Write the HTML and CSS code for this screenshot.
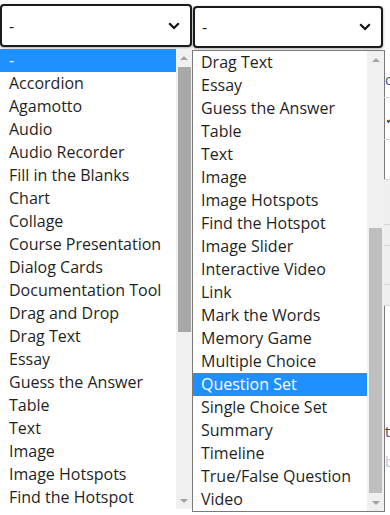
FILE: index.html
```html
<!DOCTYPE html>
<html lang="en">
<head>
<meta charset="utf-8">
<title>Select dropdowns</title>
<link rel="stylesheet" href="styles.css">
</head>
<body>
<div class="page">
  <div class="col col-left">
    <div class="select select-left">
      <span class="select-value">-</span>
      <svg class="chevron" width="12" height="8" viewBox="0 0 12 8"><path d="M1.2 1.2 L6 6 L10.8 1.2" fill="none" stroke="#111" stroke-width="2.2"/></svg>
    </div>
    <div class="listbox listbox-left">
      <ul class="options">
        <li class="option selected">-</li>
        <li class="option">Accordion</li>
        <li class="option">Agamotto</li>
        <li class="option">Audio</li>
        <li class="option">Audio Recorder</li>
        <li class="option">Fill in the Blanks</li>
        <li class="option">Chart</li>
        <li class="option">Collage</li>
        <li class="option">Course Presentation</li>
        <li class="option">Dialog Cards</li>
        <li class="option">Documentation Tool</li>
        <li class="option">Drag and Drop</li>
        <li class="option">Drag Text</li>
        <li class="option">Essay</li>
        <li class="option">Guess the Answer</li>
        <li class="option">Table</li>
        <li class="option">Text</li>
        <li class="option">Image</li>
        <li class="option">Image Hotspots</li>
        <li class="option">Find the Hotspot</li>
      </ul>
      <div class="scrollbar">
        <div class="sb-btn"><span class="arrow-up"></span></div>
        <div class="sb-track"><div class="sb-thumb thumb-left"></div></div>
        <div class="sb-btn"><span class="arrow-down"></span></div>
      </div>
    </div>
  </div>
  <div class="col col-right">
    <div class="select select-right">
      <span class="select-value">-</span>
      <svg class="chevron" width="12" height="8" viewBox="0 0 12 8"><path d="M1.2 1.2 L6 6 L10.8 1.2" fill="none" stroke="#111" stroke-width="2.2"/></svg>
    </div>
    <div class="listbox listbox-right">
      <ul class="options">
        <li class="option">Drag Text</li>
        <li class="option">Essay</li>
        <li class="option">Guess the Answer</li>
        <li class="option">Table</li>
        <li class="option">Text</li>
        <li class="option">Image</li>
        <li class="option">Image Hotspots</li>
        <li class="option">Find the Hotspot</li>
        <li class="option">Image Slider</li>
        <li class="option">Interactive Video</li>
        <li class="option">Link</li>
        <li class="option">Mark the Words</li>
        <li class="option">Memory Game</li>
        <li class="option">Multiple Choice</li>
        <li class="option selected">Question Set</li>
        <li class="option">Single Choice Set</li>
        <li class="option">Summary</li>
        <li class="option">Timeline</li>
        <li class="option">True/False Question</li>
        <li class="option">Video</li>
      </ul>
      <div class="scrollbar">
        <div class="sb-btn"><span class="arrow-up"></span></div>
        <div class="sb-track"><div class="sb-thumb thumb-right"></div></div>
        <div class="sb-btn"><span class="arrow-down"></span></div>
      </div>
    </div>
  </div>
  <div class="behind">
    <div class="bh-row bh-a"><span class="bh-o">o</span></div>
    <div class="bh-row bh-b"><span class="bh-check">✓</span></div>
    <div class="bh-row bh-c"></div>
    <div class="bh-row bh-grey bh-d"></div>
    <div class="bh-row bh-grey bh-e"></div>
    <div class="bh-row bh-grey bh-f"></div>
    <div class="bh-row bh-grey bh-g"></div>
    <div class="bh-row bh-h"><span class="bh-t">t</span></div>
    <div class="bh-row bh-i"><span class="bh-faded">b</span></div>
  </div>
</div>
</body>
</html>
```
FILE: styles.css
```css
* { box-sizing: border-box; }
html, body { margin: 0; padding: 0; background: #fff; }
body {
  font-family: "Open Sans", "Liberation Sans", sans-serif;
  font-size: 16px;
  color: #1f1f1f;
  width: 390px;
  height: 515px;
  overflow: hidden;
}
.page {
  display: flex;
  align-items: flex-start;
  height: 515px;
}
.col { display: flex; flex-direction: column; }
.col-left { width: 192px; }
.col-right { width: 192px; }

.select {
  display: flex;
  align-items: center;
  justify-content: space-between;
  border: 2px solid #1b1b1b;
  border-radius: 4px;
  background: #fff;
  box-shadow: 0 1px 3px rgba(0,0,0,0.35);
  padding: 0 10px 0 7px;
}
.select-left { margin-top: 4px; height: 43px; width: 192px; }
.select-right { margin-top: 6px; margin-left: 1px; height: 42px; width: 190px; }
.select-value { line-height: 1; }
.chevron { display: block; }

.listbox {
  display: flex;
  background: #fff;
  height: 460px;
}
.listbox-left { margin-top: 2px; width: 192px; }
.listbox-right {
  margin-top: 2px;
  height: 462px;
  border: 1px solid #7a7a7a;
  width: 193px;
}
.options {
  list-style: none;
  margin: 0;
  padding: 0;
  flex: 1;
  min-width: 0;
}
.option {
  height: 23px;
  line-height: 23px;
  padding-left: 9px;
  white-space: nowrap;
  overflow: hidden;
}
.listbox-right .option { padding-left: 8px; }
.option.selected { background: #1e90ff; color: #fff; }

.scrollbar {
  width: 16px;
  background: #f0f0f0;
  display: flex;
  flex-direction: column;
}
.listbox-right .scrollbar { width: 17px; }
.sb-btn {
  height: 17px;
  display: flex;
  align-items: center;
  justify-content: center;
}
.arrow-up {
  width: 0; height: 0;
  border-left: 4px solid transparent;
  border-right: 4px solid transparent;
  border-bottom: 4px solid #a3a3a3;
}
.arrow-down {
  width: 0; height: 0;
  border-left: 4px solid transparent;
  border-right: 4px solid transparent;
  border-top: 4px solid #a3a3a3;
}
.sb-track { flex: 1; display: flex; flex-direction: column; align-items: center; }
.sb-thumb { width: 13px; height: 265px; }
.thumb-left { margin-top: 1px; background: #a8a8a8; }
.thumb-right { margin-top: 160px; background: #bebebe; }

.behind {
  flex: 1;
  display: flex;
  flex-direction: column;
  height: 515px;
  overflow: hidden;
}
.bh-row {
  border-bottom: 1px solid #d6d6d6;
  font-size: 14px;
  color: #333;
  display: flex;
  align-items: center;
  padding-left: 1px;
}
.bh-a { height: 98px; align-items: flex-end; padding-bottom: 8px; }
.bh-o { color: #3b5a8a; }
.bh-b { height: 42px; }
.bh-check { font-size: 13px; color: #1b2a44; }
.bh-c { height: 40px; }
.bh-grey { background: #efefef; }
.bh-d { height: 45px; }
.bh-e { height: 21px; }
.bh-f { height: 39px; }
.bh-g { height: 21px; }
.bh-h { height: 135px; border-bottom: none; align-items: flex-end; }
.bh-t { color: #444; }
.bh-i { height: 40px; border-bottom: none; }
.bh-faded { color: #b8c4d4; }
```
